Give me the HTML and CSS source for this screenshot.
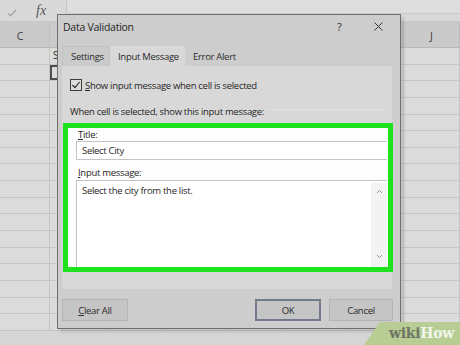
FILE: index.html
```html
<!DOCTYPE html>
<html>
<head>
<meta charset="utf-8">
<link rel="stylesheet" href="styles.css">
</head>
<body>
<div class="sheet">
  <div class="formula-bar">
    <span class="fb-check"><svg width="10" height="8" viewBox="0 0 10 8"><polyline points="1,4.5 3.6,7 9,1" fill="none" stroke="#a3a3a3" stroke-width="1.2"/></svg></span>
    <span class="fb-fx">fx</span>
    <div class="fb-input"></div>
  </div>
  <div class="grid-row header">
    <div class="cell">C</div><div class="cell"></div><div class="cell"></div><div class="cell"></div><div class="cell"></div><div class="cell"></div><div class="cell"></div><div class="cell">J</div>
  </div>
  <div class="grid-row"><div class="cell"></div><div class="cell text">S</div><div class="cell"></div><div class="cell"></div><div class="cell"></div><div class="cell"></div><div class="cell"></div><div class="cell"></div></div>
  <div class="grid-row"><div class="cell"></div><div class="cell selected"></div><div class="cell"></div><div class="cell"></div><div class="cell"></div><div class="cell"></div><div class="cell"></div><div class="cell"></div></div>
  <div class="grid-row"><div class="cell"></div><div class="cell"></div><div class="cell"></div><div class="cell"></div><div class="cell"></div><div class="cell"></div><div class="cell"></div><div class="cell"></div></div>
  <div class="grid-row"><div class="cell"></div><div class="cell"></div><div class="cell"></div><div class="cell"></div><div class="cell"></div><div class="cell"></div><div class="cell"></div><div class="cell"></div></div>
  <div class="grid-row"><div class="cell"></div><div class="cell"></div><div class="cell"></div><div class="cell"></div><div class="cell"></div><div class="cell"></div><div class="cell"></div><div class="cell"></div></div>
  <div class="grid-row"><div class="cell"></div><div class="cell"></div><div class="cell"></div><div class="cell"></div><div class="cell"></div><div class="cell"></div><div class="cell"></div><div class="cell"></div></div>
  <div class="grid-row"><div class="cell"></div><div class="cell"></div><div class="cell"></div><div class="cell"></div><div class="cell"></div><div class="cell"></div><div class="cell"></div><div class="cell"></div></div>
  <div class="grid-row"><div class="cell"></div><div class="cell"></div><div class="cell"></div><div class="cell"></div><div class="cell"></div><div class="cell"></div><div class="cell"></div><div class="cell"></div></div>
  <div class="grid-row"><div class="cell"></div><div class="cell"></div><div class="cell"></div><div class="cell"></div><div class="cell"></div><div class="cell"></div><div class="cell"></div><div class="cell"></div></div>
  <div class="grid-row"><div class="cell"></div><div class="cell"></div><div class="cell"></div><div class="cell"></div><div class="cell"></div><div class="cell"></div><div class="cell"></div><div class="cell"></div></div>
  <div class="grid-row"><div class="cell"></div><div class="cell"></div><div class="cell"></div><div class="cell"></div><div class="cell"></div><div class="cell"></div><div class="cell"></div><div class="cell"></div></div>
  <div class="grid-row"><div class="cell"></div><div class="cell"></div><div class="cell"></div><div class="cell"></div><div class="cell"></div><div class="cell"></div><div class="cell"></div><div class="cell"></div></div>
  <div class="grid-row"><div class="cell"></div><div class="cell"></div><div class="cell"></div><div class="cell"></div><div class="cell"></div><div class="cell"></div><div class="cell"></div><div class="cell"></div></div>
  <div class="grid-row"><div class="cell"></div><div class="cell"></div><div class="cell"></div><div class="cell"></div><div class="cell"></div><div class="cell"></div><div class="cell"></div><div class="cell"></div></div>
  <div class="grid-row"><div class="cell"></div><div class="cell"></div><div class="cell"></div><div class="cell"></div><div class="cell"></div><div class="cell"></div><div class="cell"></div><div class="cell"></div></div>
  <div class="grid-row"><div class="cell"></div><div class="cell"></div><div class="cell"></div><div class="cell"></div><div class="cell"></div><div class="cell"></div><div class="cell"></div><div class="cell"></div></div>
  <div class="grid-row"><div class="cell"></div><div class="cell"></div><div class="cell"></div><div class="cell"></div><div class="cell"></div><div class="cell"></div><div class="cell"></div><div class="cell"></div></div>
</div>

<div class="dialog">
  <div class="titlebar">
    <span class="title">Data Validation</span>
    <span class="help">?</span>
    <span class="close"><svg width="9" height="9" viewBox="0 0 9 9"><path d="M0.5 0.5 L8.5 8.5 M8.5 0.5 L0.5 8.5" stroke="#333" stroke-width="1"/></svg></span>
  </div>
  <div class="tabs">
    <div class="tab">Settings</div>
    <div class="tab active">Input Message</div>
    <div class="tab">Error Alert</div>
  </div>
  <div class="panel">
    <label class="check-row">
      <span class="checkbox"><svg width="10" height="10" viewBox="0 0 10 10"><polyline points="1.5,5 4,7.6 8.6,2" fill="none" stroke="#222" stroke-width="1.1"/></svg></span>
      <span><u>S</u>how input message when cell is selected</span>
    </label>
    <div class="group-label"><span>When cell is selected, show this input message:</span><span class="group-line"></span></div>
    <div class="highlight">
      <div class="field-label"><u>T</u>itle:</div>
      <div class="input">Select City</div>
      <div class="field-label second"><u>I</u>nput message:</div>
      <div class="textarea">
        <div class="ta-text">Select the city from the list.</div>
        <div class="scrollbar">
          <svg width="7" height="5" viewBox="0 0 7 5"><polyline points="1,4 3.5,1.5 6,4" fill="none" stroke="#8a8a8a" stroke-width="0.9"/></svg>
          <svg width="7" height="5" viewBox="0 0 7 5"><polyline points="1,1 3.5,3.5 6,1" fill="none" stroke="#8a8a8a" stroke-width="0.9"/></svg>
        </div>
      </div>
    </div>
  </div>
  <div class="buttons">
    <div class="btn"><u>C</u>lear All</div>
    <div class="spacer"></div>
    <div class="btn ok">OK</div>
    <div class="btn">Cancel</div>
  </div>
</div>

<div class="watermark">
  <svg class="wm-bg" width="96" height="23" viewBox="0 0 96 23"><polygon points="16,0 96,0 96,23 0,23" fill="#b7cd93"/></svg>
  <span class="wm-text"><span class="wm-wiki">wiki</span><span class="wm-how">How</span></span>
</div>
</body>
</html>
```
FILE: styles.css
```css
html, body {
  margin: 0;
  padding: 0;
}
body {
  width: 460px;
  height: 345px;
  overflow: hidden;
  position: relative;
  background: #d6d6d6;
  font-family: "Open Sans", "Noto Sans", sans-serif;
  color: #262626;
}
.sheet {
  width: 460px;
  display: flex;
  flex-direction: column;
}
.formula-bar {
  height: 22px;
  display: flex;
  align-items: flex-start;
  background: #d9d9d9;
  box-sizing: border-box;
  border-bottom: 1px solid #c6c6c6;
}
.fb-check {
  margin: 9px 0 0 7px;
  display: flex;
}
.fb-fx {
  margin: 3px 0 0 19px;
  font-family: "Liberation Serif", serif;
  font-style: italic;
  font-size: 14px;
  color: #5a5a5a;
  line-height: 16px;
  width: 14px;
}
.fb-input {
  margin-left: 16px;
  flex: 1;
  height: 13px;
  background: #dedede;
  border-left: 1px solid #c4c4c4;
  border-bottom: 1px solid #cbcbcb;
}
.grid-row {
  display: grid;
  grid-template-columns: 50px repeat(6, 59px) 56px;
  height: 16.65px;
  box-sizing: border-box;
  border-bottom: 1px solid #c5c5c5;
  background: #dbdbdb;
}
.grid-row.header {
  height: 26px;
  background: #cacaca;
  border-bottom: 1px solid #b9b9b9;
}
.cell {
  border-right: 1px solid #c5c5c5;
  font-size: 10px;
  line-height: 15px;
  white-space: nowrap;
  overflow: hidden;
  position: relative;
}
.header .cell {
  text-align: center;
  line-height: 28px;
  font-size: 10.5px;
  color: #3a3a3a;
  border-right-color: #bdbdbd;
}
.header .cell:first-child {
  text-indent: -9px;
}
.cell.text {
  padding-left: 3px;
  font-size: 10px;
  color: #333;
}
.cell.selected {
  box-shadow: inset 0 0 0 2px #4d4d4d;
}

/* dialog */
.dialog {
  position: absolute;
  left: 57px;
  top: 14px;
  width: 344px;
  height: 315px;
  box-sizing: border-box;
  border: 1px solid #6f6f6f;
  background: #cdcdcd;
  display: flex;
  flex-direction: column;
  box-shadow: 3px 3px 3px rgba(0,0,0,0.12);
  font-size: 9.5px;
  letter-spacing: -0.3px;
}
.titlebar {
  height: 23px;
  display: flex;
  align-items: center;
  padding-left: 5px;
  font-size: 10.5px;
  letter-spacing: -0.25px;
  color: #262626;
}
.title {
  flex: 1;
  padding-top: 1px;
}
.help {
  font-size: 11px;
  width: 10px;
  margin-right: 27px;
  color: #333;
}
.close {
  display: flex;
  margin-right: 17px;
}
.tabs {
  display: flex;
  margin: 8px 0 0 4px;
  height: 20px;
}
.tab {
  display: flex;
  align-items: center;
  padding: 0 0 0 8px;
  color: #2a2a2a;
  box-sizing: border-box;
  white-space: nowrap;
}
.tab:first-child {
  width: 48px;
  background: #cbcbcb;
  border: 1px solid #c2c2c2;
  border-bottom: none;
}
.tab.active {
  width: 75px;
  background: #d8d8d8;
}
.panel {
  margin-left: 4px;
  width: 330px;
  height: 223px;
  background: #d8d8d8;
  display: flex;
  flex-direction: column;
  box-sizing: border-box;
}
.check-row {
  display: flex;
  align-items: center;
  margin: 13px 0 0 8px;
  gap: 3px;
  height: 12px;
}
.checkbox {
  width: 12px;
  height: 12px;
  box-sizing: border-box;
  border: 1px solid #3c3c3c;
  background: #dcdcdc;
  display: flex;
  align-items: center;
  justify-content: center;
}
u {
  text-decoration: underline;
  text-underline-offset: 1px;
  text-decoration-thickness: 1px;
}
.group-label {
  display: flex;
  align-items: center;
  margin: 13px 5px 0 8px;
  height: 14px;
  gap: 4px;
}
.group-line {
  flex: 1;
  height: 1px;
  background: #e2e2e2;
  margin-top: -3px;
}
.highlight {
  margin: 5px 0 0 1px;
  width: 330px;
  height: 149px;
  box-sizing: border-box;
  border: 5px solid #1ee21e;
  background: #fdfdfd;
  display: flex;
  flex-direction: column;
  padding: 0 1px 0 8px;
}
.field-label {
  margin: 0 0 0 2px;
  height: 13px;
  line-height: 13px;
}
.field-label.second {
  margin-top: 5px;
  height: 15px;
  line-height: 15px;
}
.input {
  height: 19px;
  box-sizing: border-box;
  border: 1px solid #c4c4c4;
  border-right: none;
  padding-left: 5px;
  line-height: 17px;
  background: #fff;
}
.textarea {
  flex: 1;
  box-sizing: border-box;
  border: 1px solid #c4c4c4;
  border-right: none;
  border-bottom: none;
  display: flex;
  background: #fff;
}
.ta-text {
  flex: 1;
  padding: 3px 0 0 5px;
  line-height: 14px;
}
.scrollbar {
  width: 16px;
  margin-top: 2px;
  background: #f3f3f3;
  display: flex;
  flex-direction: column;
  align-items: center;
  justify-content: space-between;
  padding: 6px 0 8px;
  box-sizing: border-box;
}
.buttons {
  display: flex;
  margin: 10px 7px 0 4px;
  gap: 8px;
}
.spacer {
  flex: 1;
}
.btn {
  width: 66px;
  height: 22px;
  box-sizing: border-box;
  border: 1px solid #b4b4b4;
  background: #c5c5c5;
  display: flex;
  align-items: center;
  justify-content: center;
  color: #2a2a2a;
}
.btn:last-child {
  width: 64px;
}
.btn.ok {
  border: 2px solid #737a8a;
}

/* watermark */
.watermark {
  position: absolute;
  right: 0;
  bottom: 0;
  width: 96px;
  height: 23px;
}
.wm-bg {
  position: absolute;
  left: 0;
  top: 0;
}
.wm-text {
  position: absolute;
  left: 25px;
  top: 3px;
  font-family: "DejaVu Serif", serif;
  font-weight: bold;
  font-size: 14px;
  line-height: 16px;
  letter-spacing: -0.3px;
}
.wm-wiki {
  color: #6f7566;
}
.wm-how {
  color: #f2f5ec;
}
```
